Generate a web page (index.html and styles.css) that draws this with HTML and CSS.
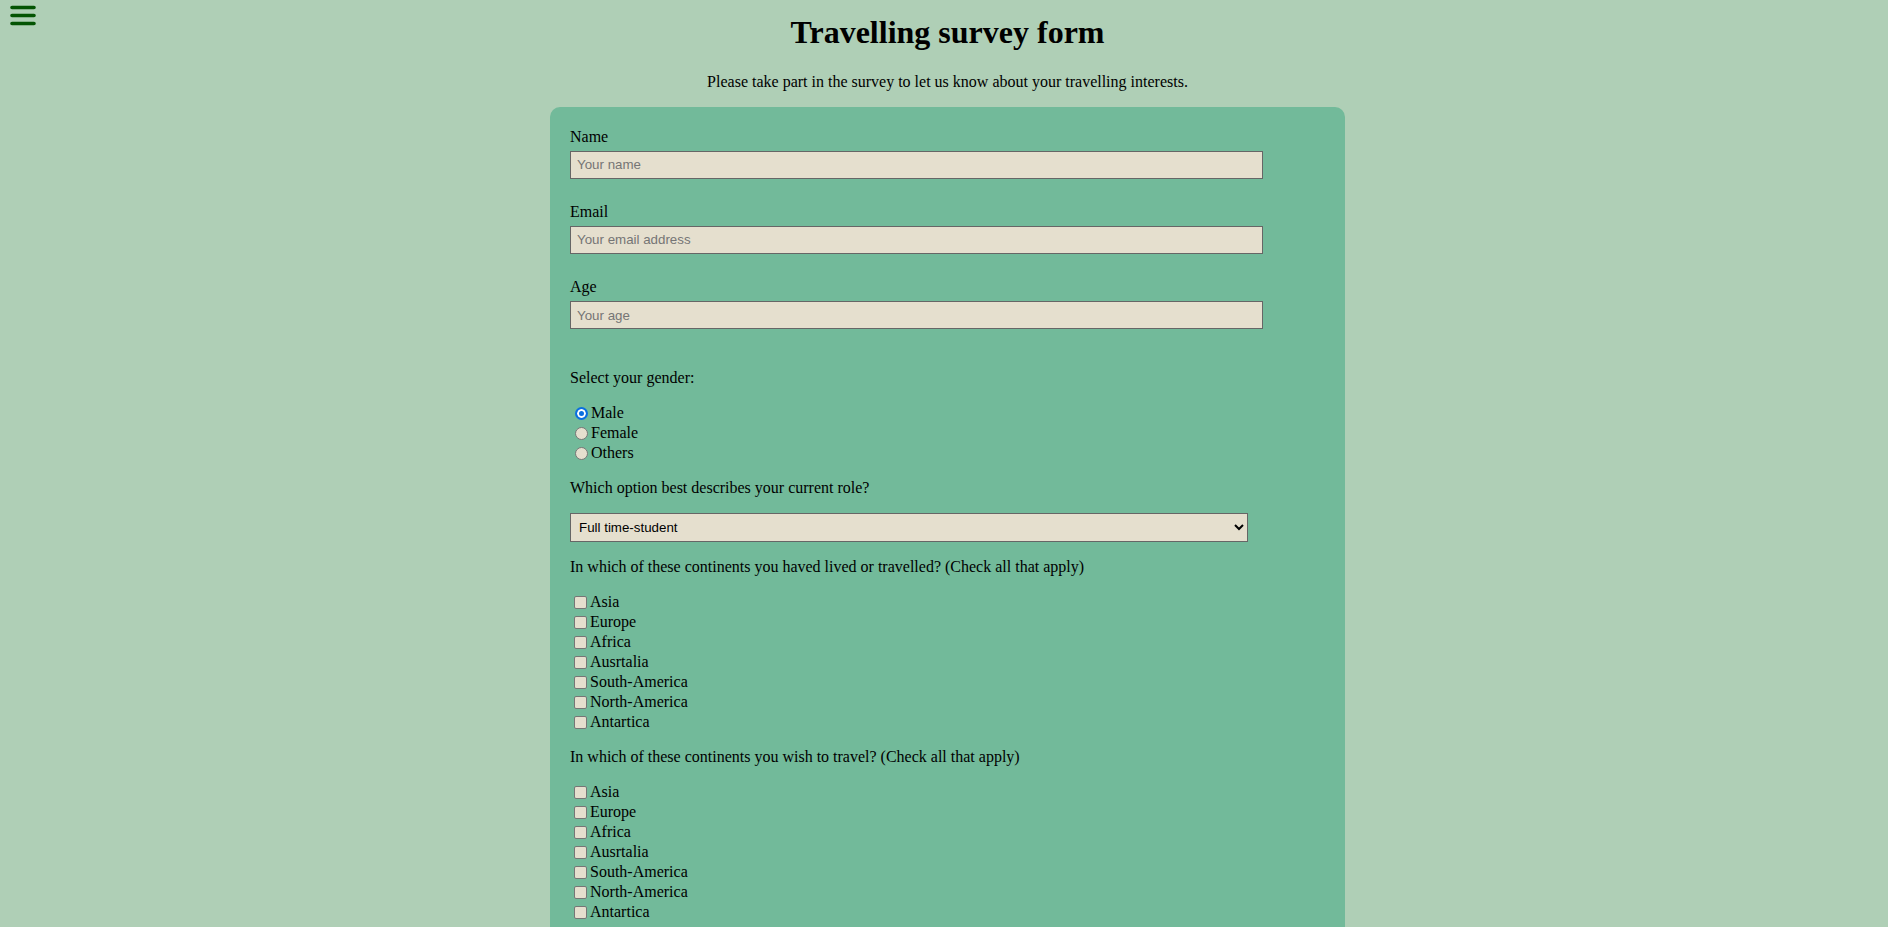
FILE: index.html
```html
<!DOCTYPE html>
<html lang="en">
<head>
<meta charset="utf-8">
<title>Travelling survey form</title>
<link rel="stylesheet" href="styles.css">
</head>
<body>
<button class="menu-btn" aria-label="Menu">
  <svg width="26" height="22" viewBox="0 0 26 22"><path d="M2 2.5H24M2 10.5H24M2 18.5H24" stroke="#035403" stroke-width="3.6" stroke-linecap="round" fill="none"/></svg>
</button>
<div class="page">
  <h1 class="title">Travelling survey form</h1>
  <p class="description">Please take part in the survey to let us know about your travelling interests.</p>
  <form class="survey">
    <div class="field">
      <label class="field-label" for="name">Name</label>
      <input class="text-input" id="name" type="text" placeholder="Your name">
    </div>
    <div class="field">
      <label class="field-label" for="email">Email</label>
      <input class="text-input" id="email" type="email" placeholder="Your email address">
    </div>
    <div class="field">
      <label class="field-label" for="age">Age</label>
      <input class="text-input" id="age" type="number" placeholder="Your age">
    </div>

    <p class="question gender-q">Select your gender:</p>
    <div class="options">
      <label class="opt"><input class="radio" type="radio" name="gender" checked>Male</label>
      <label class="opt"><input class="radio" type="radio" name="gender">Female</label>
      <label class="opt"><input class="radio" type="radio" name="gender">Others</label>
    </div>

    <p class="question">Which option best describes your current role?</p>
    <select class="role-select">
      <option>Full time-student</option>
      <option>Full time-job</option>
      <option>Part time-job</option>
      <option>Other</option>
    </select>

    <p class="question">In which of these continents you haved lived or travelled? (Check all that apply)</p>
    <div class="options">
      <label class="opt"><input class="check" type="checkbox">Asia</label>
      <label class="opt"><input class="check" type="checkbox">Europe</label>
      <label class="opt"><input class="check" type="checkbox">Africa</label>
      <label class="opt"><input class="check" type="checkbox">Ausrtalia</label>
      <label class="opt"><input class="check" type="checkbox">South-America</label>
      <label class="opt"><input class="check" type="checkbox">North-America</label>
      <label class="opt"><input class="check" type="checkbox">Antartica</label>
    </div>

    <p class="question">In which of these continents you wish to travel? (Check all that apply)</p>
    <div class="options">
      <label class="opt"><input class="check" type="checkbox">Asia</label>
      <label class="opt"><input class="check" type="checkbox">Europe</label>
      <label class="opt"><input class="check" type="checkbox">Africa</label>
      <label class="opt"><input class="check" type="checkbox">Ausrtalia</label>
      <label class="opt"><input class="check" type="checkbox">South-America</label>
      <label class="opt"><input class="check" type="checkbox">North-America</label>
      <label class="opt"><input class="check" type="checkbox">Antartica</label>
    </div>

    <p class="question">Any comments or suggestions?</p>
    <textarea class="comments" placeholder="Enter your comment here..."></textarea>
    <div class="submit-row"><button class="submit" type="submit">Submit</button></div>
  </form>
</div>
</body>
</html>
```

FILE: styles.css
```css
html {
  scrollbar-width: none;
}

body {
  margin: 0;
  background: #afcfb6;
  color: #000;
  font-family: "Liberation Serif", "Times New Roman", serif;
  font-size: 16px;
}

.menu-btn {
  position: absolute;
  top: 5px;
  left: 10px;
  padding: 0;
  margin: 0;
  border: 0;
  background: none;
  line-height: 0;
  cursor: pointer;
}

.page {
  margin-left: 7px;
  display: flex;
  flex-direction: column;
  align-items: center;
}

.title {
  margin: 14px 0 22px;
  font-size: 32px;
  font-weight: bold;
  line-height: normal;
}

.description {
  margin: 0;
  line-height: normal;
}

.survey {
  box-sizing: border-box;
  width: 795px;
  margin-top: 16px;
  padding: 21px 20px 40px;
  background: #72ba9a;
  border-radius: 10px;
}

.field {
  display: flex;
  flex-direction: column;
  align-items: flex-start;
  gap: 4.6px;
  margin-bottom: 24px;
}

.field:nth-of-type(3) {
  margin-bottom: 0;
}

.field-label {
  line-height: normal;
}

.text-input {
  box-sizing: border-box;
  width: 693px;
  height: 28.5px;
  margin: 0;
  padding: 0 6px;
  border: 1px solid #666;
  background: #e5dfce;
  font-family: "Liberation Sans", Arial, sans-serif;
  font-size: 13.33px;
  color: #000;
  outline: none;
}

.text-input::placeholder {
  color: #757575;
}

.question {
  margin: 16px 0;
  line-height: normal;
}

.gender-q {
  margin-top: 40px;
}

.options {
  display: flex;
  flex-direction: column;
}

.opt {
  display: flex;
  align-items: center;
  height: 20px;
  line-height: normal;
}

.radio,
.check {
  appearance: none;
  -webkit-appearance: none;
  box-sizing: border-box;
  width: 13px;
  height: 13px;
  margin: 1px 3px 0 5px;
  border: 1px solid #767676;
  background: #e5dfce;
  flex: none;
}

.radio {
  border-radius: 50%;
}

.radio:checked {
  border: 2px solid #0b6fe0;
  background: #0b6fe0;
  box-shadow: inset 0 0 0 2px #fff;
}

.check {
  margin-left: 4px;
  margin-right: 3px;
  border-radius: 2px;
}

.role-select {
  box-sizing: border-box;
  width: 678px;
  height: 29px;
  margin: 0;
  padding: 0 4px;
  border: 1px solid #666;
  border-radius: 0;
  background: #e5dfce;
  font-family: "Liberation Sans", Arial, sans-serif;
  font-size: 13.33px;
  color: #000;
  display: block;
}

.comments {
  box-sizing: border-box;
  width: 693px;
  height: 90px;
  border: 1px solid #666;
  background: #e5dfce;
  font-family: "Liberation Sans", Arial, sans-serif;
  font-size: 13.33px;
  padding: 6px;
  display: block;
}

.submit-row {
  margin-top: 20px;
}

.submit {
  padding: 8px 24px;
  border: 1px solid #666;
  background: #e5dfce;
  font-family: "Liberation Serif", serif;
  font-size: 16px;
}
```
